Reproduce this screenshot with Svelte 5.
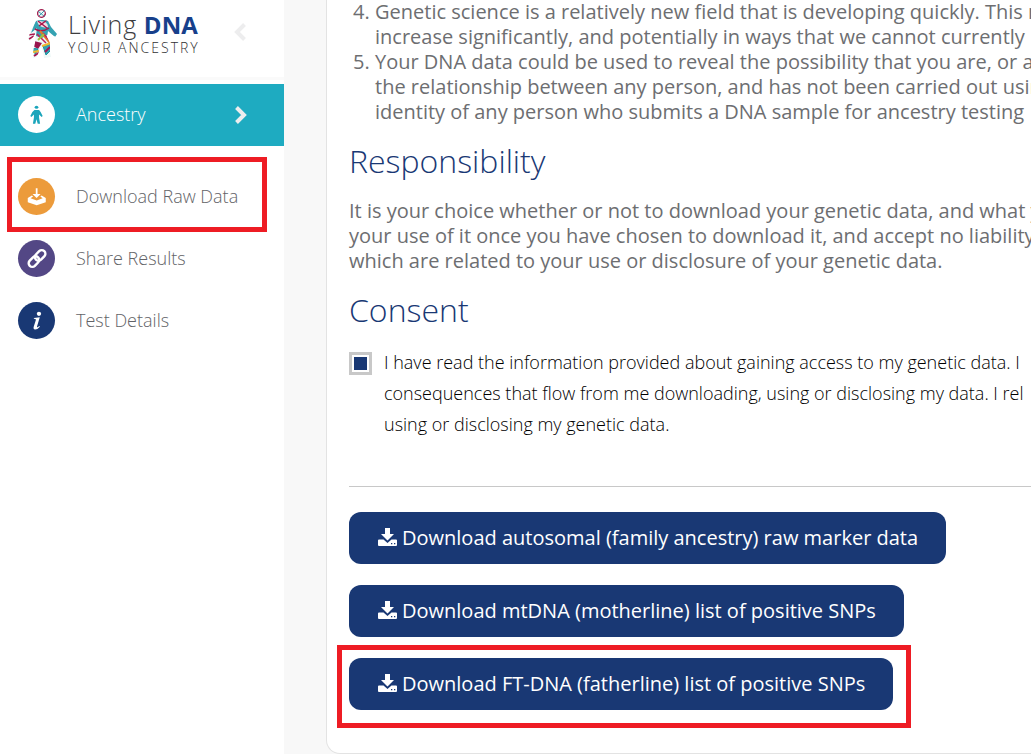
<script>
  const links = [
    { id: 'download', label: 'Download Raw Data', marked: true },
    { id: 'share', label: 'Share Results', marked: false },
    { id: 'details', label: 'Test Details', marked: false }
  ];

  const downloads = [
    { label: 'Download autosomal (family ancestry) raw marker data', marked: false },
    { label: 'Download mtDNA (motherline) list of positive SNPs', marked: false },
    { label: 'Download FT-DNA (fatherline) list of positive SNPs', marked: true }
  ];

  let agreed = $state(true);
</script>

<div class="page">
  <aside class="sidebar">
    <header class="brand">
      <svg class="figure" viewBox="0 0 30 50" aria-hidden="true">
        <defs>
          <clipPath id="person">
            <circle cx="13.500" cy="4.500" r="4.500" />
            <path d="M8 12Q14 10 20 12L23 18L29 25L27 28L20 22L19 28L22 34L22 43L23 48L16 49L15 43L13 37L11 42L9 48L5 49L5 43L7 34L8 24L6 27L2 32L0 30L3 21Z" />
          </clipPath>
        </defs>
        <g clip-path="url(#person)">
          <rect width="30" height="50" fill="#eff8f7" />
          <circle cx="13.500" cy="4.500" r="4" fill="none" stroke="#a52253" stroke-width="1.500" />
          <path d="M10 2l7 6M11 7l6-6" stroke="#3c9bb0" stroke-width="1" />
          <path d="M10 1.500l-1 5M15 8l3-4" stroke="#a52253" stroke-width="1" />
          <path d="M8 11L3 24L9 19L8 27L14 29L21 25L28 28L30 25L21 11Z" fill="#35a2b2" />
          <path d="M9 12Q11 20 20 18Q20 11 9 12" fill="#f2dce4" />
          <path d="M7 20Q14 24 21 19M10 12l9 7M11 17l8-6" fill="none" stroke="#aa174d" stroke-width="1.500" />
          <path d="M0 26l7-1M1 30l5-3" stroke="#aa174d" stroke-width="1.500" />
          <path d="M12 22l10 12" stroke="#e37c28" stroke-width="2" />
          <path d="M9 25l9 9M15 24l7 8" stroke="#c12057" stroke-width="1.500" />
          <path d="M16 25l-6 6" stroke="#9fc33d" stroke-width="2" />
          <path d="M6 32l8 2l-4 6l-5-3Z" fill="#99154d" />
          <path d="M4 39l6 1l-3 6M15 37l3 9l5-5V35Z" fill="#35a2b2" stroke="#1992a3" stroke-width="1" />
          <path d="M14 37l9-3M5 43l6-1" stroke="#f2b82e" stroke-width="2" />
          <path d="M17 43l5-5M6 47l6-4" stroke="#a41853" stroke-width="2" />
        </g>
      </svg>
      <div class="wordmark">
        <div class="name"><span>Living</span> <b>DNA</b></div>
        <div class="tagline">YOUR ANCESTRY</div>
      </div>
      <button class="collapse" aria-label="Collapse menu">
        <svg viewBox="0 0 14 20" aria-hidden="true"><path d="M11.500 2.500L4 10l7.500 7.500" /></svg>
      </button>
    </header>

    <nav>
      <a class="item active" href="#ancestry">
        <span class="badge">
          <svg viewBox="0 0 36 36" aria-hidden="true">
            <ellipse cx="18" cy="11" rx="1.800" ry="1.500" />
            <path d="M16 13.500h4.500l1.500 2l2 4l-1 1l-2.500-2.500v3l1 6h-2.300l-1.200-4.500l-1.200 4.500h-2.300l1-6v-3l-2.500 2.500l-1-1l2-4Z" />
          </svg>
        </span>
        <span class="label">Ancestry</span>
        <svg class="chevron" viewBox="0 0 14 20" aria-hidden="true"><path d="M2.500 2.500L10 10l-7.500 7.500" /></svg>
      </a>

      <div class="links">
        {#each links as link}
          <a class="item" class:marked={link.marked} href="#{link.id}">
            <span class="badge {link.id}">
              <svg viewBox="0 0 36 36" aria-hidden="true">
                {#if link.id === 'download'}
                  <path d="M17.300 10h1.700v5.500h3L18.100 19.500l-4-4h3.200Z" />
                  <path d="M13.500 17L9.500 19.500v4L18.200 26.500l8.800-3v-4L23 17l-1.300 1l2.300 1.800l-5.800 2.200l-6-2.200l2.500-1.800Z" />
                {:else if link.id === 'share'}
                  <g fill="none" stroke="#fff" stroke-width="2.400" transform="rotate(-45 18.500 18)">
                    <rect x="8.500" y="14.500" width="11.500" height="7" rx="3.500" />
                    <rect x="17" y="14.500" width="11.500" height="7" rx="3.500" />
                  </g>
                {:else}
                  <circle cx="20.400" cy="11.500" r="2.100" />
                  <path d="M15.500 15.500l5.700-.6l-2.700 8.900q-.2 1 .6.700l1.700-1.200l.5.700q-2.500 2.900-4.700 2.800q-2-.2-1.300-2.600l2-6.500q.2-1-.5-1.100l-1.400-.2Z" />
                {/if}
              </svg>
            </span>
            <span class="label">{link.label}</span>
          </a>
        {/each}
      </div>
    </nav>
  </aside>

  <main>
    <article class="card">
      <ol start="4">
        <li>
          Genetic science is a relatively new field that is developing quickly. This m<br />
          increase significantly, and potentially in ways that we cannot currently p
        </li>
        <li>
          Your DNA data could be used to reveal the possibility that you are, or a<br />
          the relationship between any person, and has not been carried out usin<br />
          identity of any person who submits a DNA sample for ancestry testing
        </li>
      </ol>

      <h2>Responsibility</h2>
      <p>
        It is your choice whether or not to download your genetic data, and what y<br />
        your use of it once you have chosen to download it, and accept no liability<br />
        which are related to your use or disclosure of your genetic data.
      </p>

      <h2>Consent</h2>
      <div class="consent">
        <input id="agree" type="checkbox" bind:checked={agreed} />
        <label for="agree">
          I have read the information provided about gaining access to my genetic data. I<br />
          consequences that flow from me downloading, using or disclosing my data. I rel<br />
          using or disclosing my genetic data.
        </label>
      </div>

      <hr />

      <div class="downloads">
        {#each downloads as item}
          <button class="download-button" class:marked={item.marked}>
            <svg viewBox="0 0 19 18" aria-hidden="true">
              <path d="M7 0h5v6h4L9.500 12.500L3 6h4Z" />
              <path fill-rule="evenodd" d="M1 11.500h4.500L9.500 15l4-3.500H18q1 0 1 1V17q0 1-1 1H1q-1 0-1-1v-4.500q0-1 1-1ZM13 15v1.300h1.300V15ZM16 15v1.300h1.300V15Z" />
            </svg>
            <span>{item.label}</span>
          </button>
        {/each}
      </div>
    </article>
  </main>
</div>

<style>
  :global(body) {
    margin: 0;
    overflow: hidden;
    background: #f8f8f8;
  }

  .page {
    display: grid;
    grid-template-columns: 284px minmax(0, 1fr);
    min-height: 100vh;
    font-family: "Open Sans", sans-serif;
    color: #6d6e71;
  }

  .sidebar {
    background: #fff;
  }

  .brand {
    display: flex;
    align-items: flex-start;
    height: 68px;
    padding: 9px 37px 0 28px;
    border-bottom: 3px solid #fafafa;
    margin-bottom: 4px;
  }

  .figure {
    width: 30px;
    height: 50px;
  }

  .wordmark {
    flex: 1;
    padding-left: 10px;
    white-space: nowrap;
  }

  .name {
    font-size: 25px;
    line-height: 30px;
    font-weight: 300;
    color: #3d3d3f;
  }

  .name span {
    letter-spacing: 1px;
  }

  .name b {
    font-size: 24px;
    color: #17408b;
    font-weight: 700;
  }

  .tagline {
    font-size: 14px;
    font-weight: 300;
    line-height: 16px;
    letter-spacing: 2px;
    color: #303032;
  }

  .collapse {
    padding: 0;
    margin-top: 13px;
    border: 0;
    background: none;
  }

  .collapse svg,
  .chevron {
    display: block;
    width: 14px;
    height: 20px;
    fill: none;
    stroke: #ededee;
    stroke-width: 4;
  }

  .item {
    box-sizing: border-box;
    position: relative;
    display: flex;
    align-items: center;
    height: 62px;
    padding: 0 36px 1px 18px;
    font-size: 18px;
    font-weight: 340;
    color: #626367;
    text-decoration: none;
  }

  .item.active {
    background: #1eabc1;
    color: #fff;
  }

  .links {
    padding-top: 20px;
  }

  .label {
    flex: 1;
    padding: 0 0 2px 21px;
  }

  .badge {
    width: 37px;
    height: 37px;
    border-radius: 50%;
    background: #fff;
    fill: #1ba5bb;
  }

  .badge svg {
    display: block;
    width: 37px;
    height: 37px;
  }

  .badge.download {
    background: #ec9b3b;
    fill: #fff;
  }

  .badge.share {
    background: #534785;
    fill: #fff;
  }

  .badge.details {
    background: #193874;
    fill: #fff;
  }

  .marked::after {
    content: "";
    position: absolute;
    border: 5px solid #ee1c24;
    pointer-events: none;
  }

  .item.marked::after {
    inset: -9px 17px -4px 7px;
  }

  main {
    padding-left: 42px;
    overflow: hidden;
  }

  .card {
    box-sizing: border-box;
    margin-right: -42px;
    padding: 0 22px 43px;
    border: 1px solid #e3e3e3;
    border-top: 0;
    border-radius: 0 0 14px 14px;
    background: #fff;
    white-space: nowrap;
  }

  ol,
  p {
    margin: 0;
    font-size: 20px;
    line-height: 25px;
  }

  ol {
    margin-top: -1px;
    padding-left: 26px;
  }

  h2 {
    margin: 16px 0;
    font-size: 32px;
    line-height: 42px;
    font-weight: 350;
    color: #193874;
  }

  .consent {
    display: flex;
    align-items: flex-start;
    gap: 12px;
    font-size: 18px;
    font-weight: 330;
    line-height: 31px;
    color: #000;
  }

  .consent input {
    appearance: none;
    flex: none;
    width: 23px;
    height: 23px;
    margin: 5px 0 0;
    border: 3px solid #c8c8c8;
    background: #fff;
  }

  .consent input:checked {
    background: #193874;
    box-shadow: inset 0 0 0 2px #fff;
  }

  hr {
    margin: 46px 0 25px;
    border: 0;
    border-top: 1px solid #c8c8c8;
  }

  .downloads {
    display: flex;
    flex-direction: column;
    align-items: flex-start;
    gap: 21px;
  }

  .download-button {
    position: relative;
    display: flex;
    align-items: center;
    gap: 5px;
    height: 52px;
    padding: 0 28px 2px 29px;
    border: 0;
    border-radius: 12px;
    background: #193874;
    color: #fff;
    font: 20px "Open Sans", sans-serif;
    white-space: nowrap;
  }

  .download-button svg {
    width: 19px;
    height: 18px;
    fill: currentColor;
  }

  .download-button.marked::after {
    inset: -13px -18px -18px -12px;
  }
</style>
